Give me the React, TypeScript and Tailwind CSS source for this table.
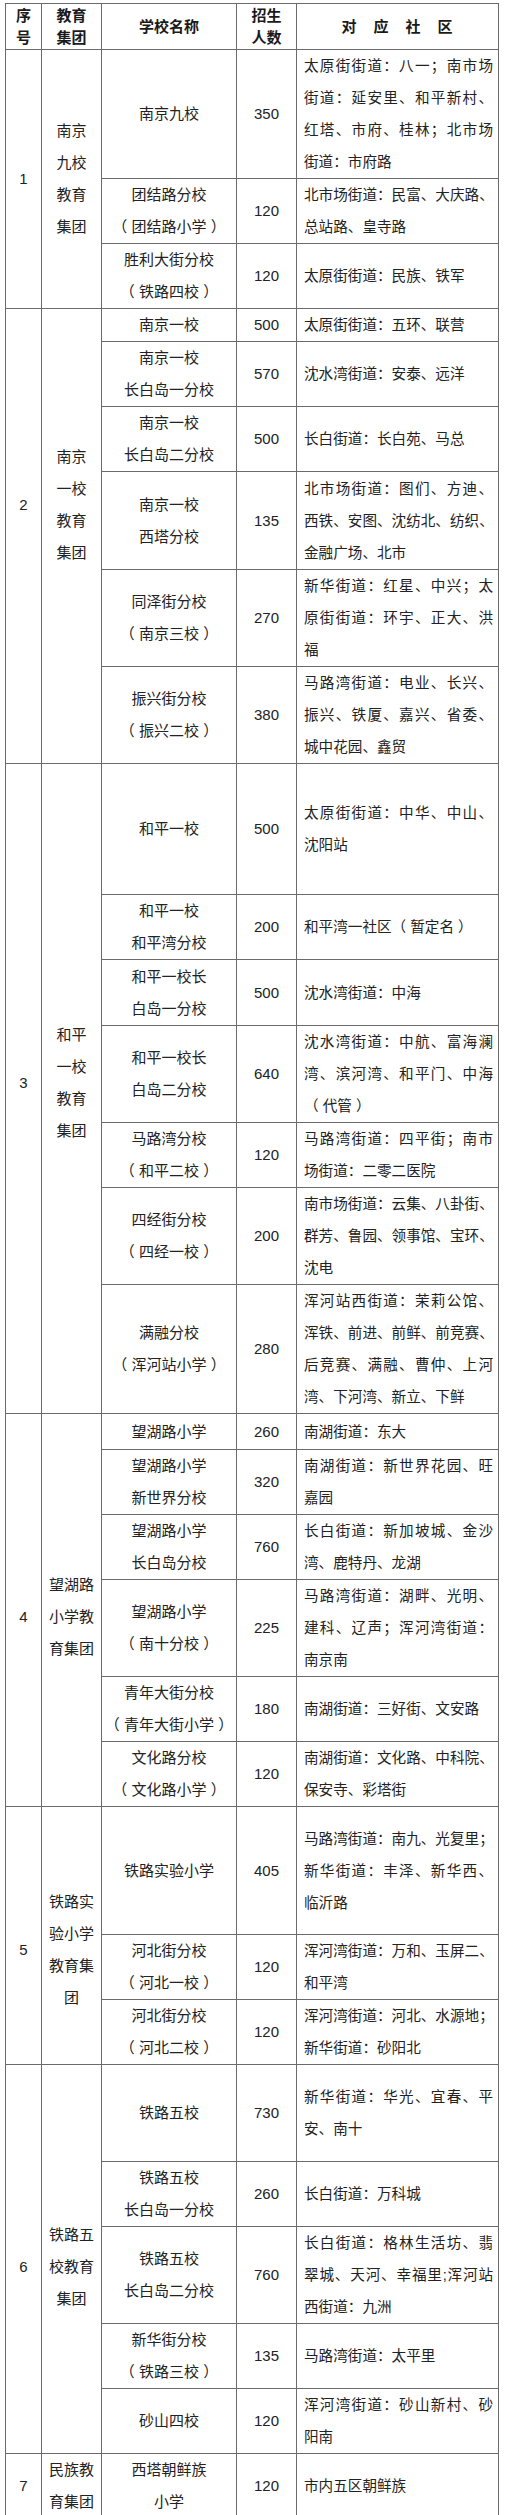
type Row = {
  school: string[];
  count: number;
  area: string[];
  h: string;
};

type Group = {
  no: number;
  name: string[];
  shift: string;
  rows: Row[];
};

// parens in the source doc sit away from the text, so keep a space inside them
const GROUPS: Group[] = [
  {
    no: 1,
    name: ["南京", "九校", "教育", "集团"],
    shift: "",
    rows: [
      {
        school: ["南京九校"],
        count: 350,
        area: ["太原街街道：八一；南市场", "街道：延安里、和平新村、", "红塔、市府、桂林；北市场", "街道：市府路"],
        h: "h-[128px]",
      },
      {
        school: ["团结路分校", "（ 团结路小学 ）"],
        count: 120,
        area: ["北市场街道：民富、大庆路、", "总站路、皇寺路"],
        h: "h-[65px]",
      },
      {
        school: ["胜利大街分校", "（ 铁路四校 ）"],
        count: 120,
        area: ["太原街街道：民族、铁军"],
        h: "h-[64px]",
      },
    ],
  },
  {
    no: 2,
    name: ["南京", "一校", "教育", "集团"],
    shift: "pb-[62px]",
    rows: [
      { school: ["南京一校"], count: 500, area: ["太原街街道：五环、联营"], h: "h-[33px]" },
      { school: ["南京一校", "长白岛一分校"], count: 570, area: ["沈水湾街道：安泰、远洋"], h: "h-[65px]" },
      { school: ["南京一校", "长白岛二分校"], count: 500, area: ["长白街道：长白苑、马总"], h: "h-[64px]" },
      {
        school: ["南京一校", "西塔分校"],
        count: 135,
        area: ["北市场街道：图们、方迪、", "西铁、安图、沈纺北、纺织、", "金融广场、北市"],
        h: "h-[98px]",
      },
      {
        school: ["同泽街分校", "（ 南京三校 ）"],
        count: 270,
        area: ["新华街道：红星、中兴；太", "原街街道：环宇、正大、洪", "福"],
        h: "h-[96px]",
      },
      {
        school: ["振兴街分校", "（ 振兴二校 ）"],
        count: 380,
        area: ["马路湾街道：电业、长兴、", "振兴、铁厦、嘉兴、省委、", "城中花园、鑫贸"],
        h: "h-[97px]",
      },
    ],
  },
  {
    no: 3,
    name: ["和平", "一校", "教育", "集团"],
    shift: "pb-[12px]",
    rows: [
      { school: ["和平一校"], count: 500, area: ["太原街街道：中华、中山、", "沈阳站"], h: "h-[131px]" },
      { school: ["和平一校", "和平湾分校"], count: 200, area: ["和平湾一社区（ 暂定名 ）"], h: "h-[64px]" },
      { school: ["和平一校长", "白岛一分校"], count: 500, area: ["沈水湾街道：中海"], h: "h-[66px]" },
      {
        school: ["和平一校长", "白岛二分校"],
        count: 640,
        area: ["沈水湾街道：中航、富海澜", "湾、滨河湾、和平门、中海", "（ 代管 ）"],
        h: "h-[97px]",
      },
      {
        school: ["马路湾分校", "（ 和平二校 ）"],
        count: 120,
        area: ["马路湾街道：四平街；南市", "场街道：二零二医院"],
        h: "h-[64px]",
      },
      {
        school: ["四经街分校", "（ 四经一校 ）"],
        count: 200,
        area: ["南市场街道：云集、八卦街、", "群芳、鲁园、领事馆、宝环、", "沈电"],
        h: "h-[97px]",
      },
      {
        school: ["满融分校", "（ 浑河站小学 ）"],
        count: 280,
        area: ["浑河站西街道：茉莉公馆、", "浑铁、前进、前鲜、前竞赛、", "后竞赛、满融、曹仲、上河", "湾、下河湾、新立、下鲜"],
        h: "h-[129px]",
      },
    ],
  },
  {
    no: 4,
    name: ["望湖路", "小学教", "育集团"],
    shift: "pt-[14px]",
    rows: [
      { school: ["望湖路小学"], count: 260, area: ["南湖街道：东大"], h: "h-[36px]" },
      { school: ["望湖路小学", "新世界分校"], count: 320, area: ["南湖街道：新世界花园、旺", "嘉园"], h: "h-[65px]" },
      { school: ["望湖路小学", "长白岛分校"], count: 760, area: ["长白街道：新加坡城、金沙", "湾、鹿特丹、龙湖"], h: "h-[65px]" },
      {
        school: ["望湖路小学", "（ 南十分校 ）"],
        count: 225,
        area: ["马路湾街道：湖畔、光明、", "建科、辽声；浑河湾街道：", "南京南"],
        h: "h-[96px]",
      },
      { school: ["青年大街分校", "（ 青年大街小学 ）"], count: 180, area: ["南湖街道：三好街、文安路"], h: "h-[65px]" },
      {
        school: ["文化路分校", "（ 文化路小学 ）"],
        count: 120,
        area: ["南湖街道：文化路、中科院、", "保安寺、彩塔街"],
        h: "h-[65px]",
      },
    ],
  },
  {
    no: 5,
    name: ["铁路实", "验小学", "教育集", "团"],
    shift: "pt-[28px]",
    rows: [
      {
        school: ["铁路实验小学"],
        count: 405,
        area: ["马路湾街道：南九、光复里；", "新华街道：丰泽、新华西、", "临沂路"],
        h: "h-[128px]",
      },
      {
        school: ["河北街分校", "（ 河北一校 ）"],
        count: 120,
        area: ["浑河湾街道：万和、玉屏二、", "和平湾"],
        h: "h-[64px]",
      },
      {
        school: ["河北街分校", "（ 河北二校 ）"],
        count: 120,
        area: ["浑河湾街道：河北、水源地；", "新华街道：砂阳北"],
        h: "h-[65px]",
      },
    ],
  },
  {
    no: 6,
    name: ["铁路五", "校教育", "集团"],
    shift: "pt-[16px]",
    rows: [
      { school: ["铁路五校"], count: 730, area: ["新华街道：华光、宜春、平", "安、南十"], h: "h-[97px]" },
      { school: ["铁路五校", "长白岛一分校"], count: 260, area: ["长白街道：万科城"], h: "h-[64px]" },
      {
        school: ["铁路五校", "长白岛二分校"],
        count: 760,
        area: ["长白街道：格林生活坊、翡", "翠城、天河、幸福里;浑河站", "西街道：九洲"],
        h: "h-[97px]",
      },
      { school: ["新华街分校", "（ 铁路三校 ）"], count: 135, area: ["马路湾街道：太平里"], h: "h-[65px]" },
      { school: ["砂山四校"], count: 120, area: ["浑河湾街道：砂山新村、砂", "阳南"], h: "h-[65px]" },
    ],
  },
  {
    no: 7,
    name: ["民族教", "育集团"],
    shift: "",
    rows: [{ school: ["西塔朝鲜族", "小学"], count: 120, area: ["市内五区朝鲜族"], h: "h-[64px]" }],
  },
];

const cell = "border border-[#6b6b6b] p-0 align-middle";

function Lines({ items }: { items: string[] }) {
  return (
    <>
      {items.map((t, i) => (
        <div key={i} className="whitespace-pre">
          {t}
        </div>
      ))}
    </>
  );
}

function Area({ items }: { items: string[] }) {
  return (
    <div className="pl-[7px] pr-[5px] text-left text-[14.6px]">
      {items.map((t, i) => (
        <div
          key={i}
          className={
            i < items.length - 1
              ? "whitespace-nowrap text-justify [text-align-last:justify]"
              : "whitespace-pre"
          }
        >
          {t}
        </div>
      ))}
    </div>
  );
}

export default function App() {
  return (
    <div className="min-h-[2515px] w-[505px] bg-white pl-[5px] pt-[3px] font-['Liberation_Sans','Noto_Sans_CJK_SC',sans-serif] text-[15px] text-[#222]">
      <table className="w-[493px] table-fixed border-collapse">
        <colgroup>
          <col className="w-[36px]" />
          <col className="w-[60px]" />
          <col className="w-[135px]" />
          <col className="w-[60px]" />
          <col className="w-[202px]" />
        </colgroup>
        <thead>
          <tr className="h-[46px] text-center font-bold leading-[22px] text-[#1a1a1a]">
            <th className={cell}>
              <div>序</div>
              <div>号</div>
            </th>
            <th className={cell}>
              <div>教育</div>
              <div>集团</div>
            </th>
            <th className={cell}>学校名称</th>
            <th className={cell}>
              <div>招生</div>
              <div>人数</div>
            </th>
            <th className={cell}>
              <span className="tracking-[1px]">对　应　社　区</span>
            </th>
          </tr>
        </thead>
        <tbody className="leading-[32px]">
          {GROUPS.map((g) =>
            g.rows.map((r, i) => (
              <tr key={`${g.no}-${i}`} className={r.h}>
                {i === 0 && (
                  <>
                    <td rowSpan={g.rows.length} className={`${cell} text-center`}>
                      <div className={g.shift}>{g.no}</div>
                    </td>
                    <td rowSpan={g.rows.length} className={`${cell} text-center`}>
                      <div className={g.shift}>
                        <Lines items={g.name} />
                      </div>
                    </td>
                  </>
                )}
                <td className={`${cell} text-center`}>
                  <Lines items={r.school} />
                </td>
                <td className={`${cell} text-center`}>{r.count}</td>
                <td className={cell}>
                  <Area items={r.area} />
                </td>
              </tr>
            ))
          )}
        </tbody>
      </table>
    </div>
  );
}
